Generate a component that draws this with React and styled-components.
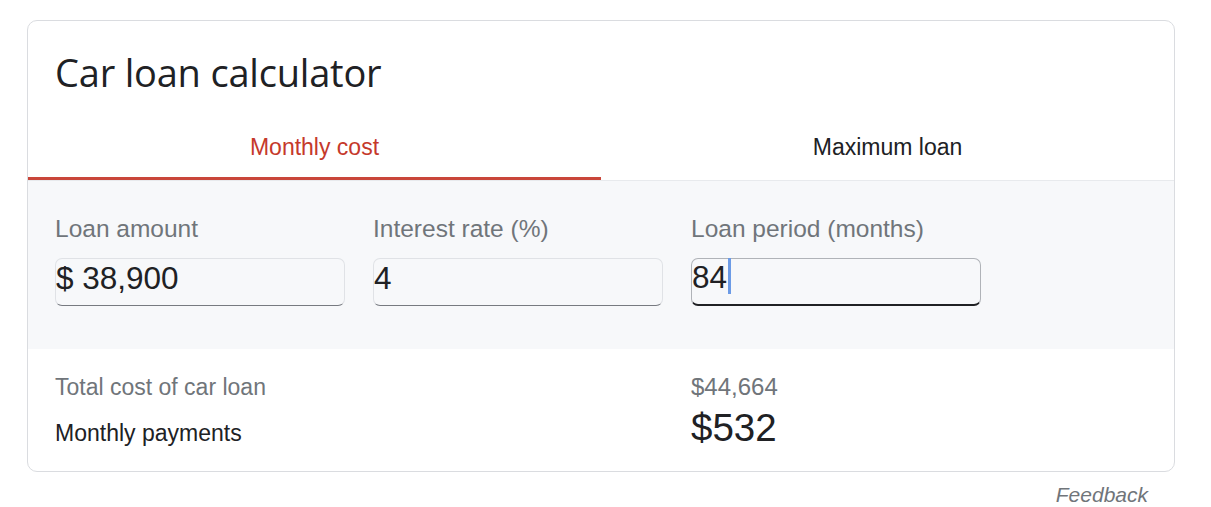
import React from "react";
import styled, { createGlobalStyle } from "styled-components";

const Global = createGlobalStyle`
  html, body { margin: 0; padding: 0; background: #ffffff; }
  body { font-family: "Liberation Sans", Arial, sans-serif; color: #202124; }
  * { box-sizing: border-box; }
`;

const Page = styled.div`
  padding: 20px 36px 0 27px;
  width: 1211px;
`;

const Card = styled.div`
  width: 1148px;
  border: 1px solid #dadce0;
  border-radius: 10px;
  overflow: hidden;
  background: #fff;
`;

const Title = styled.h1`
  margin: 0;
  padding: 31px 27px 28px;
  font-family: "Open Sans", sans-serif;
  font-weight: 400;
  font-size: 38px;
  line-height: 40px;
  color: #202124;
  letter-spacing: -0.2px;
`;

const TabBar = styled.div`
  display: grid;
  grid-template-columns: 573px 1fr;
  border-bottom: 1px solid #e8eaed;
`;

const Tab = styled.div`
  height: 60px;
  display: flex;
  align-items: center;
  justify-content: center;
  padding-bottom: 2px;
  font-size: 23px;
  color: ${(p) => (p.$active ? "#c5392b" : "#202124")};
  border-bottom: 3px solid ${(p) => (p.$active ? "#c9463a" : "transparent")};
`;

const Inputs = styled.div`
  background: #f7f8fa;
  padding: 34px 27px 43px;
  display: grid;
  grid-template-columns: repeat(3, 290px);
  column-gap: 28px;
`;

const Field = styled.div`
  display: flex;
  flex-direction: column;
  gap: 15px;
`;

const Label = styled.div`
  font-size: 24.5px;
  line-height: 28px;
  color: #70757a;
`;

const InputBox = styled.div`
  height: 48px;
  display: flex;
  align-items: center;
  padding-bottom: 8px;
  font-size: 31.5px;
  color: #202124;
  border: 1px solid ${(p) => (p.$focused ? "#b0b3b8" : "#e0e2e6")};
  border-bottom: ${(p) => (p.$focused ? "2px solid #202124" : "1.5px solid #777a80")};
  border-radius: 7px;
  background: #f7f8fa;
`;

const Caret = styled.span`
  display: inline-block;
  width: 3px;
  height: 36px;
  margin-left: 1px;
  background: #6c9be6;
  align-self: flex-start;
  margin-top: -1px;
`;

const Results = styled.div`
  display: grid;
  grid-template-columns: 636px 1fr;
  align-items: baseline;
  padding: 24px 27px 21px;
  row-gap: 5px;
`;

const ResultText = styled.div`
  font-size: ${(p) => p.$size};
  line-height: ${(p) => (p.$big ? "44px" : "28px")};
  color: ${(p) => (p.$muted ? "#70757a" : "#202124")};
`;

const FeedbackRow = styled.div`
  width: 1148px;
  display: flex;
  justify-content: flex-end;
  padding: 11px 27px 0 0;
`;

const Feedback = styled.a`
  font-size: 21px;
  line-height: 24px;
  font-style: italic;
  color: #70757a;
  text-decoration: none;
`;

export default function App() {
  return (
    <>
      <Global />
      <Page>
        <Card>
          <Title>Car loan calculator</Title>
          <TabBar>
            <Tab $active>Monthly cost</Tab>
            <Tab>Maximum loan</Tab>
          </TabBar>
          <Inputs>
            <Field>
              <Label>Loan amount</Label>
              <InputBox>$ 38,900</InputBox>
            </Field>
            <Field>
              <Label>Interest rate (%)</Label>
              <InputBox>4</InputBox>
            </Field>
            <Field>
              <Label>Loan period (months)</Label>
              <InputBox $focused>
                84
                <Caret />
              </InputBox>
            </Field>
          </Inputs>
          <Results>
            <ResultText $muted $size="23px">Total cost of car loan</ResultText>
            <ResultText $muted $size="24px">$44,664</ResultText>
            <ResultText $size="23px">Monthly payments</ResultText>
            <ResultText $big $size="38.5px">$532</ResultText>
          </Results>
        </Card>
        <FeedbackRow>
          <Feedback href="#">Feedback</Feedback>
        </FeedbackRow>
      </Page>
    </>
  );
}
